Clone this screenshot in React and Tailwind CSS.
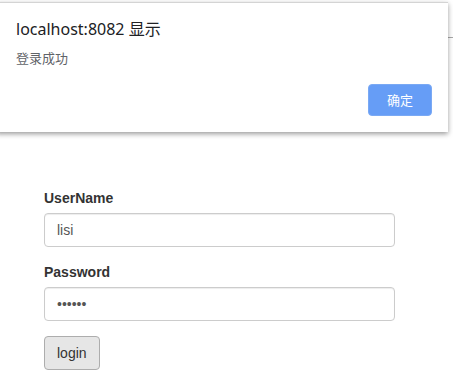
import React from 'react';

const FORM_FONT = { fontFamily: '"Liberation Sans", Arial, sans-serif' };

function AlertDialog() {
  return (
    <div
      className="absolute left-[-4px] top-[2px] w-[452px] h-[130px] bg-white border-t border-[#d4d4d4] shadow-[0_2px_5px_rgba(0,0,0,0.4)]"
      style={{ fontFamily: '"Noto Sans", "Noto Sans CJK SC", sans-serif' }}
    >
      <div className="pl-[20px] pt-[15px] text-[16px] leading-[22px] text-[#202124]">localhost:8082 显示</div>
      <div className="pl-[20px] mt-[9px] text-[13px] leading-[18px] text-[#5f6368]">登录成功</div>
      <div className="flex justify-end pr-[16px] mt-[17px]">
        <button className="w-[64px] h-[32px] rounded-[4px] bg-[#669df6] border border-[#7aa9f4] text-white text-[13px] leading-none">
          确定
        </button>
      </div>
    </div>
  );
}

export default function App() {
  return (
    <div className="relative w-[453px] h-[379px] bg-white overflow-hidden">
      <div className="h-[38px] border-b border-[#a8a8a8]" />

      <form className="pl-[44px] pt-[150px] w-[395px]" style={FORM_FONT} onSubmit={(e) => e.preventDefault()}>
        <div className="mb-[15px]">
          <label className="block mb-[5px] text-[14px] leading-[20px] font-bold text-[#333]">UserName</label>
          <input
            type="text"
            defaultValue="lisi"
            className="block w-full h-[34px] px-[12px] border border-[#ccc] rounded-[4px] text-[14px] text-[#555] shadow-[inset_0_1px_1px_rgba(0,0,0,0.075)] outline-none"
          />
        </div>
        <div className="mb-[15px]">
          <label className="block mb-[5px] text-[14px] leading-[20px] font-bold text-[#333]">Password</label>
          <input
            type="password"
            defaultValue="123456"
            className="block w-full h-[34px] px-[12px] border border-[#ccc] rounded-[4px] text-[14px] text-[#555] shadow-[inset_0_1px_1px_rgba(0,0,0,0.075)] outline-none"
          />
        </div>
        <button
          type="submit"
          className="h-[34px] px-[12px] bg-[#e6e6e6] border border-[#adadad] rounded-[4px] text-[14px] text-[#333]"
        >
          login
        </button>
      </form>

      <AlertDialog />
    </div>
  );
}
